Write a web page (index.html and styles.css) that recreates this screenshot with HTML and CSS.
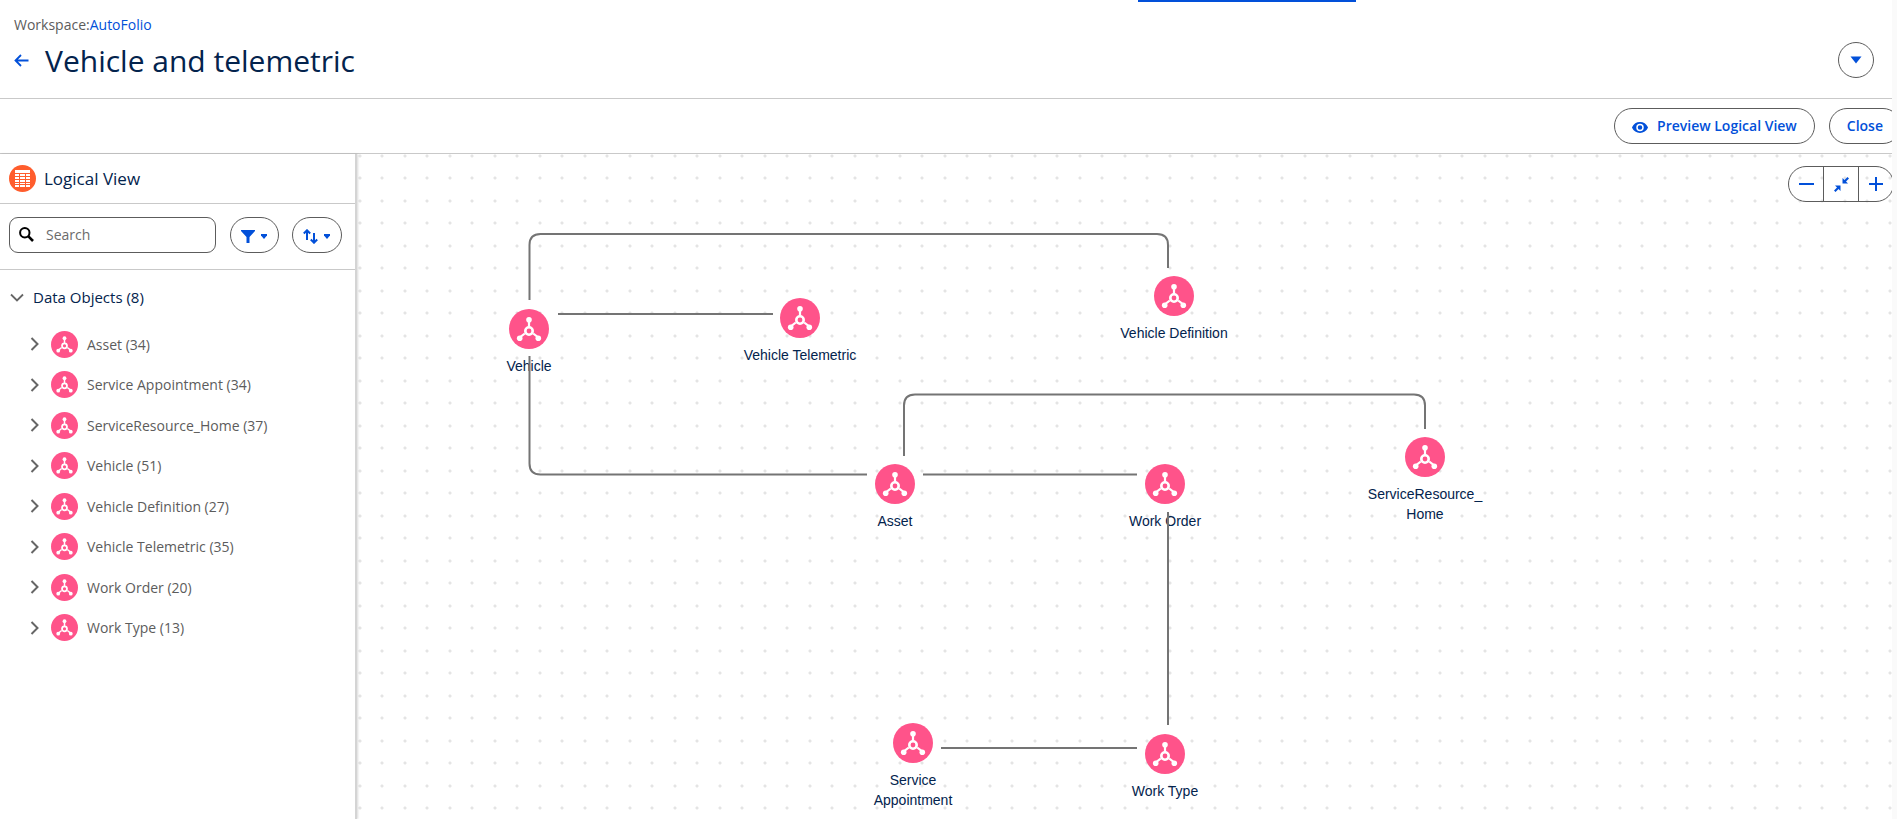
FILE: index.html
```html
<!DOCTYPE html>
<html lang="en">
<head>
<meta charset="utf-8">
<title>Vehicle and telemetric</title>
<link rel="stylesheet" href="styles.css">
</head>
<body>
<svg class="sprite" aria-hidden="true">
  <symbol id="object" viewBox="0 0 40 40">
    <circle cx="20" cy="20" r="20" fill="#ff538a"/>
    <g stroke="#fff" stroke-width="2.2" fill="none">
      <path d="M20 10.500V18M15.800 24.500L10.500 28.700M24.200 24.500l5.300 4.200"/>
      <circle cx="20" cy="22" r="3.700" stroke-width="2.600"/>
    </g>
    <g fill="#fff"><circle cx="20" cy="10.700" r="2.800"/><circle cx="10.700" cy="29.200" r="2.800"/><circle cx="29.300" cy="29.200" r="2.800"/></g>
  </symbol>
  <symbol id="chevron" viewBox="0 0 10 14"><path d="M1.500 1L7.500 7L1.500 13" fill="none" stroke="#666" stroke-width="2"/></symbol>
  <symbol id="caret" viewBox="0 0 12 8"><path d="M.5.5h11L6 7.500z" fill="#0250d9"/></symbol>
</svg>
<div class="app">
  <div class="progress"></div>
  <header class="header">
    <div class="heading">
      <p class="crumb">Workspace:<a href="#">AutoFolio</a></p>
      <div class="title-row">
        <button class="back" aria-label="Back"><svg width="15" height="13" viewBox="0 0 15 13"><path d="M14.500 6.500H1.500M7 1L1.500 6.500L7 12" fill="none" stroke="#0250d9" stroke-width="1.800"/></svg></button>
        <h1>Vehicle and telemetric</h1>
      </div>
    </div>
    <button class="btn more" aria-label="More actions"><svg width="12" height="8"><use href="#caret"/></svg></button>
  </header>
  <div class="toolbar">
    <button class="btn preview"><svg width="16" height="11" viewBox="0 0 16 11"><path d="M8 0C4.500 0 1.500 2 .2 4.900q-.3.600 0 1.200C1.500 9 4.500 11 8 11s6.500-2 7.800-4.900q.3-.6 0-1.200C14.500 2 11.500 0 8 0z" fill="#0250d9"/><circle cx="8" cy="5.500" r="3" fill="#0250d9" stroke="#fff" stroke-width="1.500"/></svg>Preview Logical View</button>
    <button class="btn close">Close</button>
  </div>
  <div class="body">
    <aside class="side">
      <div class="side-head">
        <svg width="27" height="27" viewBox="0 0 27 27"><circle cx="13.500" cy="13.500" r="13.500" fill="#ff5d2d"/><path fill="#fff" d="M6 5h15v3H6zM6 9h4v2H6zM11 9h5v2h-5zM17 9h4v2h-4zM6 12h4v2H6zM11 12h5v2h-5zM17 12h4v2h-4zM6 15h4v2H6zM11 15h5v2h-5zM17 15h4v2h-4zM6 18h4v1H6zM11 18h5v1h-5zM17 18h4v1h-4zM6 20h4v2H6zM11 20h5v2h-5zM17 20h4v2h-4z"/></svg>
        <h2>Logical View</h2>
      </div>
      <div class="filters">
        <label class="search">
          <svg width="15" height="15" viewBox="0 0 15 15"><circle cx="5.800" cy="5.800" r="4.700" fill="none" stroke="#000" stroke-width="2"/><path d="M9.200 9.200L14 14" stroke="#000" stroke-width="2.600"/></svg>
          <input type="text" placeholder="Search" aria-label="Search">
        </label>
        <button class="btn menu filter" aria-label="Filter"><svg width="14" height="13" viewBox="0 0 14 13"><path d="M0 0h14v1L8.500 7v6H5.500V7L0 1z" fill="#0250d9"/></svg><svg width="6" height="5" viewBox="0 0 6 5"><path d="M0 0h6v1.500L3 5 0 1.500z" fill="#0250d9"/></svg></button>
        <button class="btn menu sort" aria-label="Sort"><svg width="15" height="15" viewBox="0 0 15 15"><path d="M4 11V1.500M.8 4.500L4 1.300l3.200 3.200M11 4v9.500M7.800 10.500l3.200 3.200 3.200-3.200" fill="none" stroke="#0250d9" stroke-width="2"/></svg><svg width="6" height="5" viewBox="0 0 6 5"><path d="M0 0h6v1.500L3 5 0 1.500z" fill="#0250d9"/></svg></button>
      </div>
      <section class="tree">
        <button class="group"><svg width="14" height="9" viewBox="0 0 14 9"><path d="M1 1.500L7 7.500L13 1.500" fill="none" stroke="#666" stroke-width="1.800"/></svg>Data Objects (8)</button>
        <ul>
          <li><button class="row"><svg width="10" height="14"><use href="#chevron"/></svg><svg width="27" height="27"><use href="#object"/></svg>Asset (34)</button></li>
          <li><button class="row"><svg width="10" height="14"><use href="#chevron"/></svg><svg width="27" height="27"><use href="#object"/></svg>Service Appointment (34)</button></li>
          <li><button class="row"><svg width="10" height="14"><use href="#chevron"/></svg><svg width="27" height="27"><use href="#object"/></svg>ServiceResource_Home (37)</button></li>
          <li><button class="row"><svg width="10" height="14"><use href="#chevron"/></svg><svg width="27" height="27"><use href="#object"/></svg>Vehicle (51)</button></li>
          <li><button class="row"><svg width="10" height="14"><use href="#chevron"/></svg><svg width="27" height="27"><use href="#object"/></svg>Vehicle Definition (27)</button></li>
          <li><button class="row"><svg width="10" height="14"><use href="#chevron"/></svg><svg width="27" height="27"><use href="#object"/></svg>Vehicle Telemetric (35)</button></li>
          <li><button class="row"><svg width="10" height="14"><use href="#chevron"/></svg><svg width="27" height="27"><use href="#object"/></svg>Work Order (20)</button></li>
          <li><button class="row"><svg width="10" height="14"><use href="#chevron"/></svg><svg width="27" height="27"><use href="#object"/></svg>Work Type (13)</button></li>
        </ul>
      </section>
    </aside>
    <main class="canvas">
      <div class="node n-vehicle"><svg width="40" height="40"><use href="#object"/></svg><span>Vehicle</span></div>
      <div class="node n-telemetric"><svg width="40" height="40"><use href="#object"/></svg><span>Vehicle Telemetric</span></div>
      <div class="node n-definition"><svg width="40" height="40"><use href="#object"/></svg><span>Vehicle Definition</span></div>
      <div class="node n-asset"><svg width="40" height="40"><use href="#object"/></svg><span>Asset</span></div>
      <div class="node n-order"><svg width="40" height="40"><use href="#object"/></svg><span>Work Order</span></div>
      <div class="node n-resource"><svg width="40" height="40"><use href="#object"/></svg><span>ServiceResource_<br>Home</span></div>
      <div class="node n-appointment"><svg width="40" height="40"><use href="#object"/></svg><span>Service<br>Appointment</span></div>
      <div class="node n-type"><svg width="40" height="40"><use href="#object"/></svg><span>Work Type</span></div>
      <svg class="links" aria-hidden="true"><g fill="none" stroke="#747474" stroke-width="2">
        <path d="M172.500 146V91q0-11 11-11H800q11 0 11 11V114"/>
        <path d="M201 160H416"/>
        <path d="M172.500 202V309.500q0 11 11 11H510"/>
        <path d="M566 320.500H780"/>
        <path d="M547 302V251.500q0-11 11-11H1057q11 0 11 11V275"/>
        <path d="M811 358V571"/>
        <path d="M584 594H780"/>
      </g></svg>
      <div class="zoom">
        <button class="btn" aria-label="Zoom out"><svg width="15" height="15" viewBox="0 0 15 15"><path d="M0 7h15" stroke="#0250d9" stroke-width="2"/></svg></button>
        <button class="btn" aria-label="Fit to view"><svg width="15" height="15" viewBox="0 0 15 15"><path d="M8.500 6.500V1l2 2L13.500 0 15 1.500 12 4.500l2 2zM6.500 8.500V14l-2-2L1.500 15 0 13.500l3-3-2-2z" fill="#0250d9"/></svg></button>
        <button class="btn" aria-label="Zoom in"><svg width="14" height="14" viewBox="0 0 14 14"><path d="M0 7h14M7 0v14" stroke="#0250d9" stroke-width="2"/></svg></button>
      </div>
    </main>
  </div>
</div>
</body>
</html>
```
FILE: styles.css
```css
* { box-sizing: border-box; }
body {
  margin: 0;
  background: #fafafa;
  font-family: "Open Sans", "Noto Sans", sans-serif;
  font-size: 14px;
  color: #5c5c5c;
}
svg { display: block; flex: none; }
.sprite { position: absolute; width: 0; height: 0; }
button { font: inherit; color: inherit; background: none; border: 0; padding: 0; margin: 0; cursor: pointer; }
h1, h2, p, ul { margin: 0; padding: 0; font-weight: 400; }
ul { list-style: none; }
a { color: #0250d9; text-decoration: none; }

.app {
  position: relative;
  display: flex;
  flex-direction: column;
  height: 100vh;
  margin-right: 5px;
  overflow: hidden;
  background: #fff;
}
.progress { position: absolute; top: 0; left: 60.15%; width: 218px; height: 2px; background: #0250d9; }

.header {
  display: flex;
  justify-content: space-between;
  align-items: flex-start;
  padding: 14px 18px 13px 14px;
  border-bottom: 1px solid #c9c9c9;
}
.crumb { line-height: 22px; }
.title-row { display: flex; align-items: center; gap: 16px; }
.back { display: flex; }
h1 { font-size: 30px; line-height: 49px; color: #03234d; }
.btn {
  display: flex;
  align-items: center;
  justify-content: center;
  height: 36px;
  border: 1px solid #5c5c5c;
  border-radius: 18px;
  background: #fff;
  color: #0250d9;
}
.more { width: 36px; margin-top: 28px; }

.toolbar {
  display: flex;
  justify-content: flex-end;
  gap: 14px;
  margin-right: -9px;
  padding: 9px 0;
  border-bottom: 1px solid #c9c9c9;
  font-weight: 600;
}
.toolbar .btn { padding: 0 17px 2px; }
.preview { gap: 9px; }
.preview svg { margin-top: 5px; }

.body { display: flex; flex: 1; min-height: 0; }
.side {
  position: relative;
  z-index: 1;
  width: 357px;
  flex: none;
  border-right: 2px solid #d4d4d4;
  box-shadow: 1px 0 2px #00000026;
  background: #fff;
}
.side-head {
  display: flex;
  align-items: center;
  gap: 8px;
  height: 50px;
  padding-left: 9px;
  border-bottom: 1px solid #c9c9c9;
}
h2 { font-size: 17px; line-height: 24px; color: #03234d; }
.filters {
  display: flex;
  align-items: center;
  padding: 13px 13px 16px 9px;
  border-bottom: 1px solid #c9c9c9;
}
.search {
  display: flex;
  align-items: center;
  flex: 1;
  min-width: 0;
  gap: 12px;
  height: 36px;
  padding: 0 9px 2px;
  border: 1px solid #5c5c5c;
  border-radius: 9px;
}
.search input { width: 100%; min-width: 0; border: 0; padding: 0; outline: 0; background: none; font: inherit; }
.search input::placeholder { color: #6b6b6b; opacity: 1; }
.menu { gap: 6px; padding: 3px 2px 0 0; }
.filter { width: 49px; margin-left: 14px; }
.sort { width: 50px; margin-left: 13px; }

.tree { padding-top: 9px; }
.group { display: flex; align-items: center; gap: 9px; height: 36px; padding-left: 10px; font-size: 15px; color: #03234d; }
.tree ul { padding-top: 9px; }
.row { display: flex; align-items: center; width: 100%; height: 40px; padding-left: 30px; }
li:nth-child(even) .row { height: 41px; }
.row svg + svg { margin: 0 9px 0 11px; }

.canvas {
  position: relative;
  flex: 1;
  overflow: hidden;
  background-color: #fff;
  background-image:
    radial-gradient(circle at 3px 2px, #e4e4e4 1px, transparent 2px),
    radial-gradient(circle at 25px 2px, #e4e4e4 1px, transparent 2px),
    radial-gradient(circle at 3px 24px, #e4e4e4 1px, transparent 2px),
    radial-gradient(circle at 25px 24px, #e4e4e4 1px, transparent 2px);
  background-size: 45px 45px;
}
.links { position: absolute; inset: 0; width: 100%; height: 100%; pointer-events: none; }
.node {
  position: absolute;
  display: flex;
  flex-direction: column;
  align-items: center;
  gap: 7px;
  width: 120px;
  font-family: "Liberation Sans", Arial, sans-serif;
  line-height: 20px;
  text-align: center;
  color: #03234d;
}
.n-vehicle { left: 112px; top: 155px; }
.n-telemetric { left: 383px; top: 144px; }
.n-definition { left: 757px; top: 122px; }
.n-asset { left: 478px; top: 310px; }
.n-order { left: 748px; top: 310px; }
.n-resource { left: 1008px; top: 283px; }
.n-appointment { left: 496px; top: 569px; }
.n-type { left: 748px; top: 580px; }
.zoom { position: absolute; top: 12px; right: -2px; display: flex; }
.zoom .btn { width: 36px; margin-left: -1px; border-radius: 0; background: none; }
.zoom .btn:first-child { border-radius: 18px 0 0 18px; }
.zoom .btn:last-child { border-radius: 0 18px 18px 0; }
```
